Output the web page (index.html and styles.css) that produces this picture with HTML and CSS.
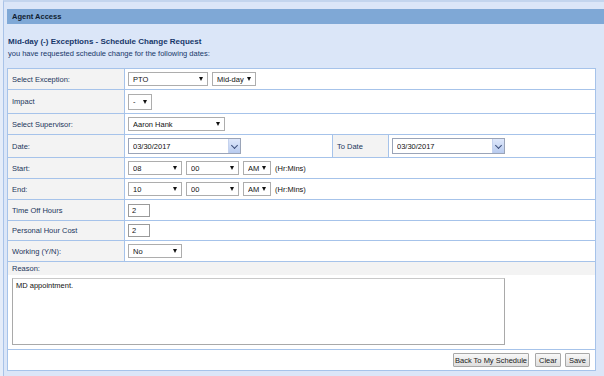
FILE: index.html
```html
<!DOCTYPE html>
<html lang="en">
<head>
    <meta charset="UTF-8">
    <title>Agent Access</title>
    <link rel="stylesheet" href="styles.css">
</head>
<body>
    <div class="frame">
        <div class="bar">Agent Access</div>

        <div class="intro">
            <h2>Mid-day (-) Exceptions - Schedule Change Request</h2>
            <p>you have requested schedule change for the following dates:</p>
        </div>

        <table class="form">
            <colgroup>
                <col class="c-label">
                <col class="c-date">
                <col class="c-label2">
                <col>
            </colgroup>
            <tr>
                <th>Select Exception:</th>
                <td colspan="3">
                    <div class="line">
                        <span class="pick w80"><select><option>PTO</option></select></span>
                        <span class="pick w44"><select><option>Mid-day</option></select></span>
                    </div>
                </td>
            </tr>
            <tr class="tall">
                <th>Impact</th>
                <td colspan="3">
                    <span class="pick w24 big"><select><option>-</option></select></span>
                </td>
            </tr>
            <tr>
                <th>Select Supervisor:</th>
                <td colspan="3">
                    <span class="pick w97"><select><option>Aaron Hank</option></select></span>
                </td>
            </tr>
            <tr class="date-row">
                <th>Date:</th>
                <td>
                    <span class="datebox"><input type="text" value="03/30/2017"><span class="cal"></span></span>
                </td>
                <th>To Date</th>
                <td>
                    <span class="datebox"><input type="text" value="03/30/2017"><span class="cal"></span></span>
                </td>
            </tr>
            <tr>
                <th>Start:</th>
                <td colspan="3">
                    <div class="line">
                        <span class="pick w54"><select><option>08</option></select></span>
                        <span class="pick w53"><select><option>00</option></select></span>
                        <span class="pick w28"><select><option>AM</option></select></span>
                        <span class="hint">(Hr:Mins)</span>
                    </div>
                </td>
            </tr>
            <tr>
                <th>End:</th>
                <td colspan="3">
                    <div class="line">
                        <span class="pick w54"><select><option>10</option></select></span>
                        <span class="pick w53"><select><option>00</option></select></span>
                        <span class="pick w28"><select><option>AM</option></select></span>
                        <span class="hint">(Hr:Mins)</span>
                    </div>
                </td>
            </tr>
            <tr>
                <th>Time Off Hours</th>
                <td colspan="3"><input class="num" type="text" value="2"></td>
            </tr>
            <tr class="short">
                <th>Personal Hour Cost</th>
                <td colspan="3"><input class="num" type="text" value="2"></td>
            </tr>
            <tr>
                <th>Working (Y/N):</th>
                <td colspan="3">
                    <span class="pick w54"><select><option>No</option></select></span>
                </td>
            </tr>
            <tr class="reason-head">
                <th colspan="4">Reason:</th>
            </tr>
            <tr class="reason">
                <td colspan="4"><textarea>MD appointment.</textarea></td>
            </tr>
            <tr class="actions">
                <td colspan="4">
                    <div class="buttons">
                        <button class="btn back">Back To My Schedule</button>
                        <button class="btn clear">Clear</button>
                        <button class="btn save">Save</button>
                    </div>
                </td>
            </tr>
        </table>
    </div>
</body>
</html>
```

FILE: styles.css
```css
* { margin: 0; padding: 0; box-sizing: border-box; }
html, body { height: 100%; }
body { background: #e4ecf9; font-family: "Liberation Sans", Arial, sans-serif; font-size: 7.5px; color: #111; overflow: hidden; }

.frame { margin-left: 3px; height: 100%; background: #dbe6f8; border-left: 1px solid #a9c3e8; border-top: 2px solid #c3d5ee; padding: 7px 0 0 3px; }
.bar { height: 15px; line-height: 15px; background: #7fa8d6; color: #0f1d30; font-weight: bold; padding-left: 5px; }

.intro { padding: 13px 0 9px 1px; color: #17376a; }
.intro h2 { font-size: 8px; line-height: 10px; font-weight: bold; }
.intro p { line-height: 11px; margin-top: 1px; }

.form { width: 589px; border-collapse: collapse; table-layout: fixed; background: #fff; }
.form col.c-label { width: 117px; }
.form col.c-date { width: 208px; }
.form col.c-label2 { width: 56px; }
.form th, .form td { border: 1px solid #a6c3ea; height: 21px; vertical-align: middle; }
.form th { background: #f3f3f3; color: #1c365c; font-weight: normal; text-align: left; padding: 0 4px; white-space: nowrap; }
.form td { padding: 0 3px; }
.form tr.tall th, .form tr.tall td { height: 24px; }
.form tr.date-row th, .form tr.date-row td { height: 23px; }
.form tr.short th, .form tr.short td { height: 20px; }

.line { display: flex; align-items: center; gap: 3px; }
.line .pick + .pick { margin-left: 1px; }
.hint { color: #111; margin-left: 1px; }

.pick { position: relative; display: inline-block; vertical-align: middle; }
.pick select { appearance: none; -webkit-appearance: none; width: 100%; height: 14px; border: 1px solid #adadad; background: #fff; font-family: inherit; font-size: 7.5px; color: #111; padding: 0 0 0 4px; border-radius: 0; outline: none; }
.pick.big select { height: 16px; }
.pick::after { content: ""; position: absolute; right: 5px; top: 50%; margin-top: -2px; border-left: 2.5px solid transparent; border-right: 2.5px solid transparent; border-top: 4px solid #111; }
.w24 { width: 24px; }
.w28 { width: 28px; }
.w44 { width: 44px; }
.w53 { width: 53px; }
.w54 { width: 54px; }
.w80 { width: 80px; }
.w97 { width: 97px; }

.datebox { position: relative; display: inline-block; vertical-align: middle; width: 113px; height: 16px; }
.datebox input { width: 100%; height: 16px; border: 1px solid #9aa4b8; font-family: inherit; font-size: 7.5px; color: #111; padding: 0 0 0 4px; outline: none; }
.cal { position: absolute; right: 1px; top: 1px; width: 12px; height: 14px; background: linear-gradient(#dfe8fb, #b8cbef); border-left: 1px solid #c4d2ee; }
.cal::after { content: ""; position: absolute; left: 3px; top: 4px; width: 4px; height: 4px; border-right: 1.5px solid #3d4f7a; border-bottom: 1.5px solid #3d4f7a; transform: rotate(45deg); transform-origin: center; }

.num { width: 22px; height: 13px; border: 1px solid #9a9a9a; font-family: inherit; font-size: 7.5px; color: #111; padding: 0 0 0 3px; outline: none; vertical-align: middle; }

.form tr.reason-head th { height: 13px; line-height: 11px; border-bottom: none; }
.form tr.reason td { height: 75px; border-top: none; padding: 3px 4px; vertical-align: top; }
.reason textarea { display: block; width: 493px; height: 67px; border: 1px solid #a9a9a9; border-top-color: #c9c9c9; resize: none; font-family: inherit; font-size: 7.5px; color: #111; padding: 2px 3px; outline: none; }

.form tr.actions td { height: 21px; padding: 0 5px 0 0; }
.buttons { display: flex; justify-content: flex-end; }
.btn { height: 14px; padding: 0; border: 1px solid #a8a8a8; background: linear-gradient(#f8f8f8, #dedede); font-family: inherit; font-size: 7.5px; color: #1a1a1a; border-radius: 1px; }
.btn.back { width: 76px; }
.btn.clear { width: 26px; margin-left: 6px; }
.btn.save { width: 25px; margin-left: 4px; }
```
